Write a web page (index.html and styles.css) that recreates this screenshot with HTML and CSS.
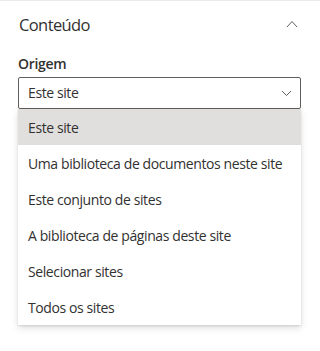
FILE: index.html
```html
<!DOCTYPE html>
<html lang="pt">
<head>
    <meta charset="UTF-8">
    <meta name="viewport" content="width=device-width, initial-scale=1.0">
    <title>Conteúdo</title>
    <link rel="stylesheet" href="styles.css">
</head>
<body>
    <div class="panel">
        <div class="section-header">
            <h2 class="section-title">Conteúdo</h2>
            <svg class="chevron-up" width="12" height="8" viewBox="0 0 12 8">
                <path d="M1 7 L6 1.5 L11 7" fill="none" stroke="#605e5c" stroke-width="1" />
            </svg>
        </div>

        <label class="field-label">Origem</label>
        <div class="dropdown">
            <div class="dropdown-box">
                <span class="dropdown-value">Este site</span>
                <svg class="chevron-down" width="11" height="7" viewBox="0 0 11 7">
                    <path d="M1 1 L5.5 5.5 L10 1" fill="none" stroke="#605e5c" stroke-width="1" />
                </svg>
            </div>
            <!-- Lista aberta sobre o conteúdo -->
            <ul class="dropdown-menu">
                <li class="option selected">Este site</li>
                <li class="option">Uma biblioteca de documentos neste site</li>
                <li class="option">Este conjunto de sites</li>
                <li class="option">A biblioteca de páginas deste site</li>
                <li class="option">Selecionar sites</li>
                <li class="option">Todos os sites</li>
            </ul>
        </div>
    </div>
</body>
</html>
```

FILE: styles.css
```css
* {
    margin: 0;
    padding: 0;
    box-sizing: border-box;
    font-family: 'Segoe UI', 'Open Sans', sans-serif;
}

body {
    background: #ffffff;
    color: #323130;
}

.panel {
    border-top: 1px solid #edebe9;
    padding: 0 19px 0 18px;
    min-height: 350px;
}

.section-header {
    display: flex;
    align-items: center;
    justify-content: space-between;
    height: 46px;
    padding-left: 1px;
    padding-right: 3px;
}

.section-title {
    font-size: 16.5px;
    font-weight: 400;
    letter-spacing: -0.6px;
    color: #323130;
}

.field-label {
    display: block;
    font-size: 14px;
    font-weight: 600;
    letter-spacing: -0.3px;
    line-height: 20px;
    margin-top: 7px;
    margin-bottom: 3px;
}

.dropdown {
    position: relative;
}

.dropdown-box {
    display: flex;
    align-items: center;
    justify-content: space-between;
    height: 32px;
    border: 1px solid #605e5c;
    border-radius: 2px;
    padding: 0 8px 0 9px;
}

.dropdown-value {
    font-size: 14px;
    letter-spacing: -0.4px;
    line-height: 20px;
}

.dropdown-menu {
    position: absolute;
    top: 32px;
    left: 0;
    right: 0;
    list-style: none;
    background: #ffffff;
    box-shadow: 0 3.2px 7.2px rgba(0, 0, 0, 0.13), 0 0.6px 1.8px rgba(0, 0, 0, 0.11);
}

.option {
    height: 36px;
    display: flex;
    align-items: center;
    padding-left: 10px;
    font-size: 14px;
    letter-spacing: -0.4px;
    color: #323130;
    white-space: nowrap;
}

.option.selected {
    background: #e1dfdd;
}
```
